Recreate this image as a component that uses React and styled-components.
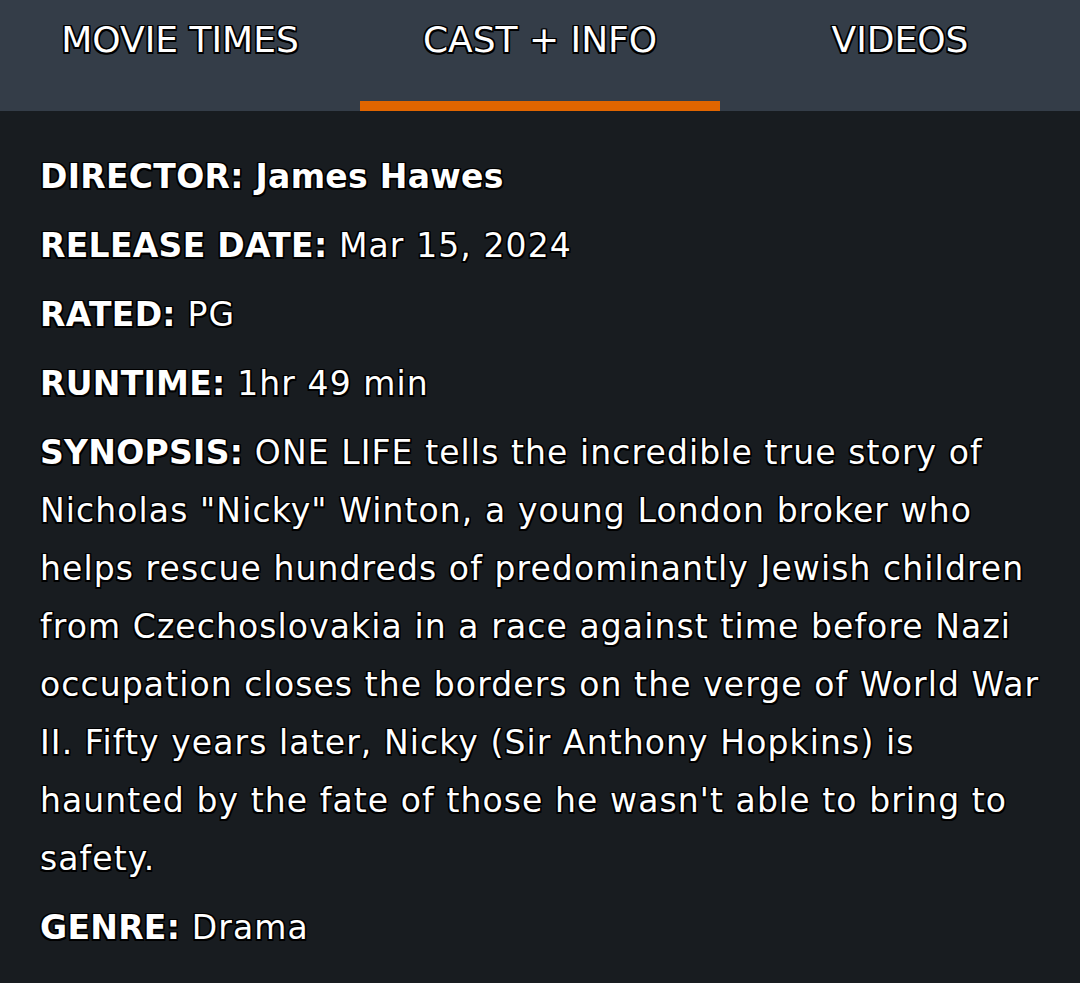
import React from "react";
import styled, { createGlobalStyle } from "styled-components";

const Global = createGlobalStyle`
  html, body { margin: 0; padding: 0; background: #181c20; }
  body { font-family: "DejaVu Sans", "Open Sans", sans-serif; color: #fff; }
`;

const outline = `
  text-shadow: -1.5px -1.5px 0 #000, 1.5px -1.5px 0 #000, -1.5px 1.5px 0 #000, 1.5px 1.5px 0 #000,
    0 -1.5px 0 #000, 0 1.5px 0 #000, -1.5px 0 0 #000, 1.5px 0 0 #000;
`;

const Page = styled.div`
  width: 1080px;
  min-height: 983px;
  background: #181c20;
`;

const TabBar = styled.nav`
  display: grid;
  grid-template-columns: repeat(3, 1fr);
  height: 111px;
  background: #343d48;
`;

const Tab = styled.div`
  display: flex;
  justify-content: center;
  padding-top: 16px;
  box-sizing: border-box;
  font-size: 36px;
  line-height: 48px;
  text-transform: uppercase;
  color: #fff;
  ${outline}
  border-bottom: 10px solid ${(p) => (p.$active ? "#e06500" : "transparent")};
`;

const Info = styled.section`
  padding: 37px 40px 0;
`;

const Row = styled.p`
  margin: 0 0 11px;
  font-size: 33px;
  line-height: 58px;
  letter-spacing: 1.1px;
  color: #fff;
  ${outline}
`;

const Label = styled.b`
  font-weight: 700;
  letter-spacing: 0.3px;
`;

const rows = [
  ["DIRECTOR:", <Label key="d"> James Hawes</Label>],
  ["RELEASE DATE:", " Mar 15, 2024"],
  ["RATED:", " PG"],
  ["RUNTIME:", " 1hr 49 min"],
  [
    "SYNOPSIS:",
    ' ONE LIFE tells the incredible true story of Nicholas "Nicky" Winton, a young London broker who helps rescue hundreds of predominantly Jewish children from Czechoslovakia in a race against time before Nazi occupation closes the borders on the verge of World War II. Fifty years later, Nicky (Sir Anthony Hopkins) is haunted by the fate of those he wasn\'t able to bring to safety.',
  ],
  ["GENRE:", " Drama"],
];

export default function App() {
  return (
    <Page>
      <Global />
      <TabBar>
        <Tab>Movie Times</Tab>
        <Tab $active>Cast + Info</Tab>
        <Tab>Videos</Tab>
      </TabBar>
      <Info>
        {rows.map(([label, value]) => (
          <Row key={label}>
            <Label>{label}</Label>
            {value}
          </Row>
        ))}
      </Info>
    </Page>
  );
}
